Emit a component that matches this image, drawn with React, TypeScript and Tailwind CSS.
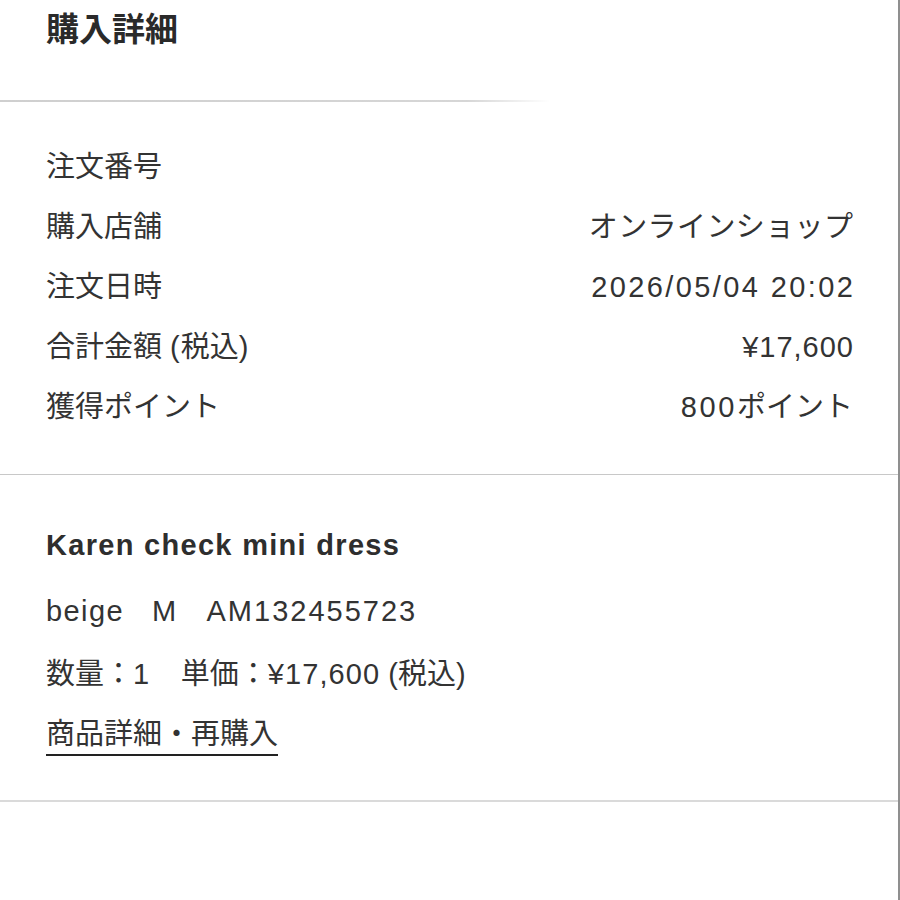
import React from "react";

const font = { fontFamily: '"Liberation Sans", "Noto Sans CJK JP", sans-serif' };

export default function App() {
  return (
    <div
      className="w-[900px] h-[900px] bg-white text-[#333] border-r-2 border-[#8f8f8f] overflow-hidden"
      style={font}
    >
      <div className="h-[100px] pl-[46px] pt-[10px]">
        <h1 className="text-[33px] font-bold leading-[40px] text-[#2a2a2a]">購入詳細</h1>
      </div>
      <div className="h-[2px] w-[550px] bg-gradient-to-r from-[#cfcfcf] via-[#d6d6d6] via-85% to-transparent" />
      <div className="pl-[46px] pr-[45px] pt-[36px] pb-[36px] text-[29px]">
        <div className="h-[60px] flex items-center justify-between">
          <span>注文番号</span>
          <span />
        </div>
        <div className="h-[60px] flex items-center justify-between">
          <span>購入店舗</span>
          <span className="tracking-[0.4px] mr-[-0.4px]">オンラインショップ</span>
        </div>
        <div className="h-[60px] flex items-center justify-between">
          <span>注文日時</span>
          <span className="tracking-[2.4px] mr-[-2.4px]">2026/05/04 20:02</span>
        </div>
        <div className="h-[60px] flex items-center justify-between">
          <span>
            合計金額 <span className="tracking-[1px]">(</span>税込<span>)</span>
          </span>
          <span className="tracking-[1px] mr-[-1px]">¥17,600</span>
        </div>
        <div className="h-[60px] flex items-center justify-between">
          <span>獲得ポイント</span>
          <span>
            <span className="tracking-[2.6px]">800</span>ポイント
          </span>
        </div>
      </div>
      <div className="h-px bg-[#c8c8c8]" />
      <div className="pl-[46px] pt-[52px] h-[325px] text-[29px]">
        <div className="font-bold leading-[36px] text-[#2e2e2e] tracking-[1.3px]">Karen check mini dress</div>
        <div className="leading-[36px] mt-[30px]">
          <span className="tracking-[1.4px]">beige</span>
          <span className="inline-block w-[28px]" />
          <span className="tracking-[1.4px]">M</span>
          <span className="inline-block w-[29px]" />
          <span className="tracking-[2px]">AM132455723</span>
        </div>
        <div className="leading-[36px] mt-[27px]">
          数量：<span className="tracking-[1.6px]">1</span>
          <span className="inline-block w-[30px]" />
          単価：<span className="tracking-[1.1px]">¥17,600</span> (税込)
        </div>
        <div className="mt-[21px]">
          <span className="leading-[36px] inline-block border-b-2 border-[#222] pb-[2px]">商品詳細・再購入</span>
        </div>
      </div>
      <div className="h-[2px] bg-[#dadada]" />
    </div>
  );
}
